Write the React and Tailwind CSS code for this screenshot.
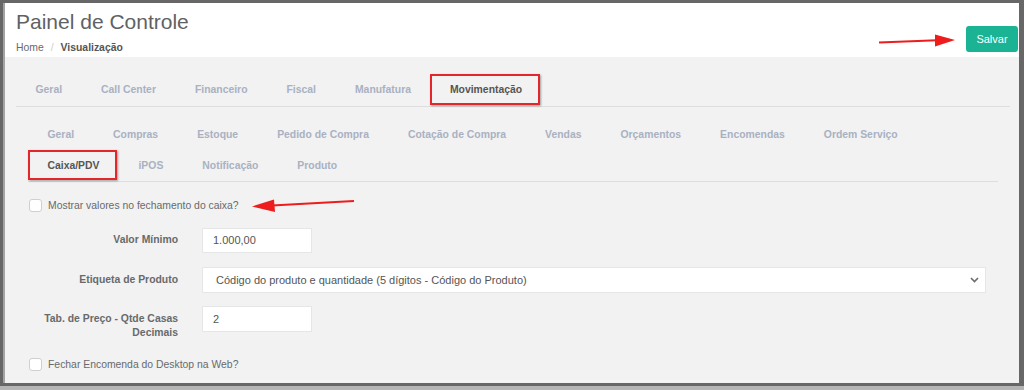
import React from "react";

const FONT = { fontFamily: '"Liberation Sans", Arial, sans-serif' };

function Tab({ label, active }) {
  return (
    <div className="relative h-full flex items-center px-[19.5px]">
      <span
        className={
          "text-[10.4px] font-bold whitespace-nowrap " +
          (active ? "text-[#555555]" : "text-[#a9b1c1]")
        }
      >
        {label}
      </span>
      {active && (
        <span className="absolute top-0 bottom-[1px] left-0 right-[2px] border-2 border-[#e4262b] shadow-[1px_1px_2px_rgba(0,0,0,0.35)]" />
      )}
    </div>
  );
}

function Checkbox() {
  return (
    <span className="inline-block w-[13px] h-[13px] bg-white border border-[#cfcfcf] rounded-[3px]" />
  );
}

export default function App() {
  const top = ["Geral", "Call Center", "Financeiro", "Fiscal", "Manufatura", "Movimentação"];
  const sub1 = [
    "Geral",
    "Compras",
    "Estoque",
    "Pedido de Compra",
    "Cotação de Compra",
    "Vendas",
    "Orçamentos",
    "Encomendas",
    "Ordem Serviço",
  ];
  const sub2 = ["Caixa/PDV", "iPOS", "Notificação", "Produto"];

  return (
    <div className="relative w-[1024px] h-[390px] bg-[#b5b5b5] overflow-hidden" style={FONT}>
      <div className="w-[1024px] h-[386px] bg-[#676767] pt-[3px] pl-[3px] pr-[5px] pb-[3px] flex">
        <div className="flex-1 flex flex-col border-l-2 border-[#a3a3a3] bg-[#f2f2f2]">
          {/* Header */}
          <div className="h-[54px] bg-white flex justify-between pl-[11px] pr-[1px]">
            <div className="pt-[6px]">
              <div className="text-[21px] leading-[26px] text-[#5f6264]">Painel de Controle</div>
              <div className="mt-[6px] text-[10.4px] leading-[14px] text-[#676a6c] flex items-center">
                <span>Home</span>
                <span className="mx-[7px] text-[#cccccc]">/</span>
                <span className="font-bold text-[#555555]">Visualização</span>
              </div>
            </div>
            <div className="flex items-end pb-[5px]">
              <div className="w-[52px] h-[26px] rounded-[3px] bg-[#1ab394] text-white text-[11px] flex items-center justify-center">
                Salvar
              </div>
            </div>
          </div>

          {/* Gray panel */}
          <div className="flex-1 pl-[11px] pr-[9px] pt-[17px]">
            <div className="h-[33px] flex border-b border-[#dedede]">
              {top.map((t) => (
                <Tab key={t} label={t} active={t === "Movimentação"} />
              ))}
            </div>

            <div className="px-[12px] pt-[12px]">
              <div className="border-b border-[#dedede]">
                <div className="h-[31px] flex">
                  {sub1.map((t) => (
                    <Tab key={t} label={t} />
                  ))}
                </div>
                <div className="h-[31px] flex">
                  {sub2.map((t) => (
                    <Tab key={t} label={t} active={t === "Caixa/PDV"} />
                  ))}
                </div>
              </div>

              <div className="mt-[17px] h-[13px] flex items-center gap-[6px] pl-[1px]">
                <Checkbox />
                <span className="text-[10.4px] text-[#676a6c]">
                  Mostrar valores no fechamento do caixa?
                </span>
              </div>

              <div className="mt-[16px] flex">
                <div className="w-[162px] pr-[12px] text-right pt-[5px] text-[10.4px] leading-[14px] font-bold text-[#676a6c]">
                  Valor Mínimo
                </div>
                <div className="pl-[12px]">
                  <div className="w-[110px] h-[25px] bg-white border border-[#e5e6e7] flex items-center px-[10px] text-[11px] text-[#555555]">
                    1.000,00
                  </div>
                </div>
              </div>

              <div className="mt-[14px] flex">
                <div className="w-[162px] pr-[12px] text-right pt-[6px] text-[10.4px] leading-[14px] font-bold text-[#676a6c]">
                  Etiqueta de Produto
                </div>
                <div className="flex-1 px-[12px]">
                  <div className="h-[26px] bg-white border border-[#e5e6e7] flex items-center justify-between pl-[13px] pr-[6px] text-[11px] text-[#555555]">
                    <span>Código do produto e quantidade (5 dígitos - Código do Produto)</span>
                    <svg width="9" height="6" viewBox="0 0 9 6">
                      <path d="M1 1 L4.5 4.5 L8 1" fill="none" stroke="#6b6b6b" strokeWidth="1.6" />
                    </svg>
                  </div>
                </div>
              </div>

              <div className="mt-[13px] flex">
                <div className="w-[162px] pr-[12px] text-right pt-[6px] text-[10.4px] leading-[14px] font-bold text-[#676a6c]">
                  Tab. de Preço - Qtde Casas
                  <br />
                  Decimais
                </div>
                <div className="pl-[12px]">
                  <div className="w-[110px] h-[26px] bg-white border border-[#e5e6e7] flex items-center px-[10px] text-[11px] text-[#555555]">
                    2
                  </div>
                </div>
              </div>

              <div className="mt-[18px] h-[13px] flex items-center gap-[6px] pl-[1px]">
                <Checkbox />
                <span className="text-[10.4px] text-[#676a6c]">
                  Fechar Encomenda do Desktop na Web?
                </span>
              </div>
            </div>
          </div>
        </div>
      </div>

      {/* Annotation arrows */}
      <svg className="absolute left-0 top-0" width="1024" height="390" viewBox="0 0 1024 390">
        <path d="M879 42.5 L937 40.2" stroke="#ee1c1c" strokeWidth="2" fill="none" />
        <polygon points="935,34.5 955,40 935,46.5" fill="#ee1c1c" />
        <path d="M354 201 L272 205.5" stroke="#ee1c1c" strokeWidth="2" fill="none" />
        <polygon points="274,199.5 252,206.5 275,212" fill="#ee1c1c" />
      </svg>
    </div>
  );
}
